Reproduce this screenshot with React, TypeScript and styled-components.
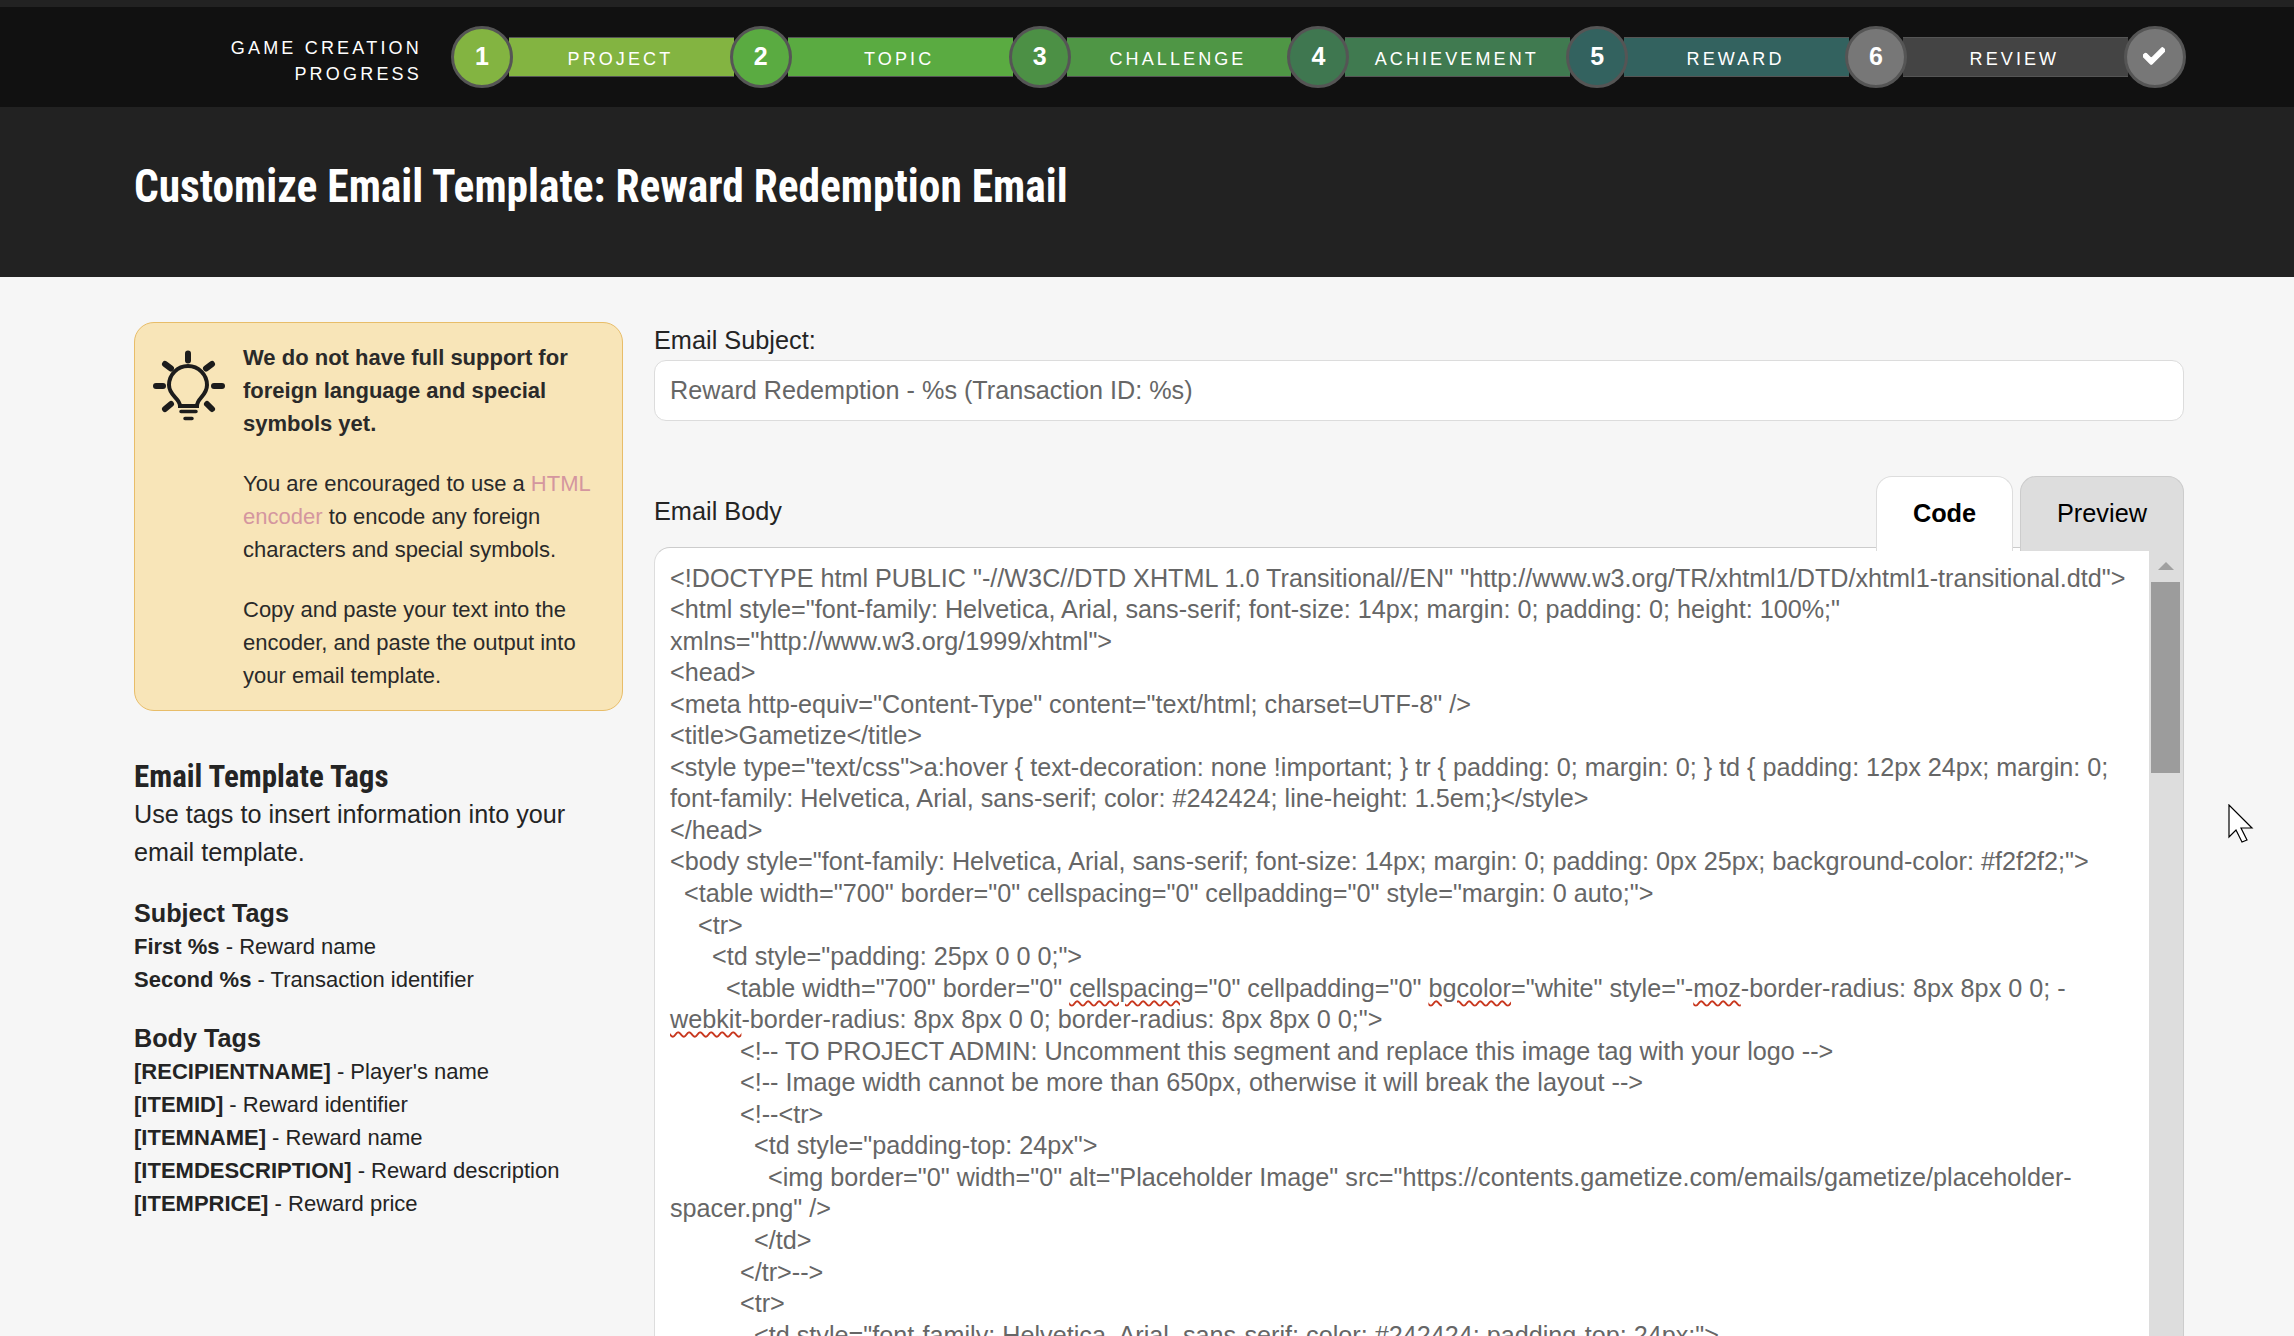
import React from "react";
import styled, { createGlobalStyle } from "styled-components";
import { FaCheck } from "react-icons/fa";

const Global = createGlobalStyle`
  html, body { margin: 0; padding: 0; height: 1336px; overflow: hidden; background: #f6f6f6; }
  body { font-family: "Liberation Sans", Arial, sans-serif; color: #242424; }
  * { box-sizing: border-box; }
`;

const Page = styled.div`
  position: relative;
  width: 2294px;
  height: 1336px;
  overflow: hidden;
  background: #f6f6f6;
`;

const TopStrip = styled.div`
  height: 7px;
  background: #222;
`;

const ProgressNav = styled.nav`
  display: flex;
  align-items: center;
  height: 100px;
  background: #111;
`;

const ProgressLabel = styled.div`
  width: 422px;
  margin-right: 29px;
  padding-top: 7px;
  text-align: right;
  color: #fff;
  font-size: 18px;
  line-height: 26px;
  letter-spacing: 3.2px;
`;

const Track = styled.ol`
  display: flex;
  align-items: center;
  margin: 0;
  padding: 0;
  list-style: none;
`;

const Step = styled.li`
  display: flex;
  align-items: center;
`;

const Circle = styled.span<{ $bg: string }>`
  position: relative;
  z-index: 1;
  display: flex;
  align-items: center;
  justify-content: center;
  width: 62px;
  height: 62px;
  border: 3px solid #555;
  border-radius: 50%;
  background: ${(p) => p.$bg};
  color: #fff;
  font-size: 25px;
  font-weight: 700;
  padding-bottom: 2px;
`;

const Bar = styled.span<{ $bg: string }>`
  display: flex;
  align-items: center;
  justify-content: center;
  width: 224.8px;
  height: 40px;
  margin: 0 -4px;
  padding: 4px 2px 0 0;
  background: ${(p) => p.$bg};
  border-top: 1.5px solid #555;
  border-bottom: 1.5px solid #555;
  color: #fff;
  font-size: 18px;
  letter-spacing: 3.1px;
`;

const CheckMark = styled(FaCheck)`
  stroke: currentColor;
  stroke-width: 30px;
  margin-left: -2px;
`;

const TitleBar = styled.header`
  display: flex;
  align-items: center;
  height: 170px;
  padding: 0 0 12px 134px;
  background: #222;
`;

const Title = styled.h1`
  margin: 0;
  color: #fff;
  font-family: "Roboto Condensed", "Liberation Sans Narrow", Roboto, sans-serif;
  font-size: 46px;
  font-weight: 700;
  line-height: 54px;
  transform: scaleX(0.944);
  transform-origin: left center;
  white-space: nowrap;
`;

const Main = styled.main`
  display: flex;
  gap: 31px;
  padding: 45px 110px 0 134px;
`;

const Sidebar = styled.aside`
  flex: none;
  width: 489px;
`;

const Alert = styled.section`
  display: grid;
  grid-template-columns: 72px 1fr;
  column-gap: 18px;
  height: 389px;
  padding: 17.5px 20px 0 18px;
  background: #f8e5b8;
  border: 1px solid #e8bd69;
  border-radius: 20px;
  font-size: 22px;
  line-height: 33px;
  color: #2a2a2a;
`;

const BulbWrap = styled.div`
  padding-top: 9px;
`;

const AlertText = styled.div`
  min-width: 0;
`;

const AlertPara = styled.p`
  margin: 0 0 27px;
`;

const AlertLink = styled.a`
  color: #d4969f;
  text-decoration: none;
`;

const TagsHeading = styled.h2`
  margin: 46px 0 0;
  font-family: "Roboto Condensed", "Liberation Sans Narrow", Roboto, sans-serif;
  font-size: 32px;
  font-weight: 700;
  line-height: 38px;
  color: #242424;
  white-space: nowrap;
  transform: scaleX(0.967);
  transform-origin: left center;
`;

const TagsIntro = styled.p`
  margin: 0;
  font-size: 25.2px;
  line-height: 38px;
`;

const TagGroup = styled.div`
  margin-top: 26px;
  font-size: 22px;
  line-height: 33px;
`;

const TagGroupTitle = styled.h3`
  margin: 0;
  font-size: 25.2px;
  font-weight: 700;
  line-height: 33px;
`;

const TagRow = styled.div``;

const Content = styled.div`
  flex: 1;
  min-width: 0;
`;

const FieldLabel = styled.label`
  display: block;
  font-size: 25.3px;
  line-height: 36px;
  margin-bottom: 2px;
`;

const SubjectInput = styled.div`
  height: 61px;
  padding: 0 15px;
  display: flex;
  align-items: center;
  background: #fff;
  border: 1px solid #dcdcdc;
  border-radius: 12px;
  color: #666;
  font-size: 25.2px;
`;

const BodyHead = styled.div`
  position: relative;
  z-index: 1;
  display: flex;
  align-items: center;
  justify-content: space-between;
  margin-top: 55px;
  height: 71px;
`;

const Tabs = styled.div`
  display: flex;
  gap: 7px;
  align-self: flex-start;
`;

const Tab = styled.div<{ $active?: boolean }>`
  display: flex;
  align-items: center;
  justify-content: center;
  height: 75px;
  padding-bottom: 2px;
  border: 1px solid ${(p) => (p.$active ? "#ddd" : "#ccc")};
  border-bottom: none;
  border-radius: 16px 16px 0 0;
  background: ${(p) => (p.$active ? "#fff" : "#ddd")};
  color: #000;
  font-size: 25.3px;
  font-weight: ${(p) => (p.$active ? 700 : 400)};
  width: ${(p) => (p.$active ? "137px" : "164px")};
`;

const Editor = styled.div`
  display: flex;
  height: 800px;
  border-top: 1px solid #ccc;
  border-left: 1px solid #ddd;
  border-top-left-radius: 16px;
  background: #fff;
`;

const CodeArea = styled.div`
  flex: 1;
  min-width: 0;
  padding: 14.5px 15px 0;
  color: #666;
  font-size: 25.2px;
  line-height: 31.55px;
  overflow: hidden;
`;

const CodeLine = styled.div`
  white-space: pre-wrap;
`;

const Misspelled = styled.span`
  text-decoration: underline wavy #c8371e 1.5px;
  text-underline-offset: 3px;
`;

const Scrollbar = styled.div`
  flex: none;
  width: 35px;
  background: #ddd;
  border-right: 1px solid #ccc;
`;

const ScrollArrow = styled.div`
  margin: 14px auto 0;
  width: 0;
  height: 0;
  border-left: 8.5px solid transparent;
  border-right: 8.5px solid transparent;
  border-bottom: 8px solid #a0a0a0;
`;

const ScrollThumb = styled.div`
  margin: 12px 3px 0 2px;
  height: 191px;
  background: #9c9c9c;
`;

const Pointer = styled.svg`
  position: absolute;
  left: 2228px;
  top: 804px;
`;

const Bulb = () => (
  <svg width="72" height="72" viewBox="0 0 72 72" fill="none" stroke="#1c1c1c" strokeLinecap="round">
    <g strokeWidth="6">
      <path d="M35 3.5v7" />
      <path d="M12 14l6 4.5" />
      <path d="M59 14l-6 4.5" />
      <path d="M3 36h7" />
      <path d="M61 36h8" />
      <path d="M12 59l6-5" />
      <path d="M59 59l-5-5" />
    </g>
    <path strokeWidth="4" d="M27 56C27 48 16 46 16 35A19 19 0 0 1 54 35C54 46 44 48 44 56Z" />
    <path strokeWidth="3.5" d="M28 61.5h15M32 68.5h7" />
  </svg>
);

const steps = [
  { n: "1", label: "PROJECT", c: "#83b441", b: "#83b441" },
  { n: "2", label: "TOPIC", c: "#5aab41", b: "#5aab41" },
  { n: "3", label: "CHALLENGE", c: "#4c9045", b: "#4f9645" },
  { n: "4", label: "ACHIEVEMENT", c: "#3f7750", b: "#407a50" },
  { n: "5", label: "REWARD", c: "#33625f", b: "#33625f" },
  { n: "6", label: "REVIEW", c: "#777", b: "#444" },
];

type Seg = string | { bad: string };
const code: Seg[][] = [
  [`<!DOCTYPE html PUBLIC "-//W3C//DTD XHTML 1.0 Transitional//EN" "http://www.w3.org/TR/xhtml1/DTD/xhtml1-transitional.dtd">`],
  [`<html style="font-family: Helvetica, Arial, sans-serif; font-size: 14px; margin: 0; padding: 0; height: 100%;" xmlns="http://www.w3.org/1999/xhtml">`],
  [`<head>`],
  [`<meta http-equiv="Content-Type" content="text/html; charset=UTF-8" />`],
  [`<title>Gametize</title>`],
  [`<style type="text/css">a:hover { text-decoration: none !important; } tr { padding: 0; margin: 0; } td { padding: 12px 24px; margin: 0; font-family: Helvetica, Arial, sans-serif; color: #242424; line-height: 1.5em;}</style>`],
  [`</head>`],
  [`<body style="font-family: Helvetica, Arial, sans-serif; font-size: 14px; margin: 0; padding: 0px 25px; background-color: #f2f2f2;">`],
  [`  <table width="700" border="0" cellspacing="0" cellpadding="0" style="margin: 0 auto;">`],
  [`    <tr>`],
  [`      <td style="padding: 25px 0 0 0;">`],
  [
    `        <table width="700" border="0" `,
    { bad: "cellspacing" },
    `="0" cellpadding="0" `,
    { bad: "bgcolor" },
    `="white" style="-`,
    { bad: "moz" },
    `-border-radius: 8px 8px 0 0; -`,
    { bad: "webkit" },
    `-border-radius: 8px 8px 0 0; border-radius: 8px 8px 0 0;">`,
  ],
  [`          <!-- TO PROJECT ADMIN: Uncomment this segment and replace this image tag with your logo -->`],
  [`          <!-- Image width cannot be more than 650px, otherwise it will break the layout -->`],
  [`          <!--<tr>`],
  [`            <td style="padding-top: 24px">`],
  [`              <img border="0" width="0" alt="Placeholder Image" src="https://contents.gametize.com/emails/gametize/placeholder-spacer.png" />`],
  [`            </td>`],
  [`          </tr>-->`],
  [`          <tr>`],
  [`            <td style="font-family: Helvetica, Arial, sans-serif; color: #242424; padding-top: 24px;">`],
];

export default function App() {
  return (
    <Page>
      <Global />
      <TopStrip />
      <ProgressNav>
        <ProgressLabel>
          GAME CREATION
          <br />
          PROGRESS
        </ProgressLabel>
        <Track>
          {steps.map((s) => (
            <Step key={s.n}>
              <Circle $bg={s.c}>{s.n}</Circle>
              <Bar $bg={s.b}>{s.label}</Bar>
            </Step>
          ))}
          <Step>
            <Circle $bg="#777">
              <CheckMark size={22} />
            </Circle>
          </Step>
        </Track>
      </ProgressNav>
      <TitleBar>
        <Title>Customize Email Template: Reward Redemption Email</Title>
      </TitleBar>
      <Main>
        <Sidebar>
          <Alert>
            <BulbWrap>
              <Bulb />
            </BulbWrap>
            <AlertText>
              <AlertPara>
                <strong>We do not have full support for foreign language and special symbols yet.</strong>
              </AlertPara>
              <AlertPara>
                You are encouraged to use a <AlertLink href="#">HTML encoder</AlertLink> to encode any foreign
                characters and special symbols.
              </AlertPara>
              <AlertPara>Copy and paste your text into the encoder, and paste the output into your email template.</AlertPara>
            </AlertText>
          </Alert>
          <TagsHeading>Email Template Tags</TagsHeading>
          <TagsIntro>Use tags to insert information into your email template.</TagsIntro>
          <TagGroup>
            <TagGroupTitle>Subject Tags</TagGroupTitle>
            <TagRow><strong>First %s</strong> - Reward name</TagRow>
            <TagRow><strong>Second %s</strong> - Transaction identifier</TagRow>
          </TagGroup>
          <TagGroup>
            <TagGroupTitle>Body Tags</TagGroupTitle>
            <TagRow><strong>[RECIPIENTNAME]</strong> - Player's name</TagRow>
            <TagRow><strong>[ITEMID]</strong> - Reward identifier</TagRow>
            <TagRow><strong>[ITEMNAME]</strong> - Reward name</TagRow>
            <TagRow><strong>[ITEMDESCRIPTION]</strong> - Reward description</TagRow>
            <TagRow><strong>[ITEMPRICE]</strong> - Reward price</TagRow>
          </TagGroup>
        </Sidebar>
        <Content>
          <FieldLabel>Email Subject:</FieldLabel>
          <SubjectInput>Reward Redemption - %s (Transaction ID: %s)</SubjectInput>
          <BodyHead>
            <FieldLabel>Email Body</FieldLabel>
            <Tabs>
              <Tab $active>Code</Tab>
              <Tab>Preview</Tab>
            </Tabs>
          </BodyHead>
          <Editor>
            <CodeArea>
              {code.map((line, i) => (
                <CodeLine key={i}>
                  {line.map((seg, j) =>
                    typeof seg === "string" ? seg : <Misspelled key={j}>{seg.bad}</Misspelled>
                  )}
                </CodeLine>
              ))}
            </CodeArea>
            <Scrollbar>
              <ScrollArrow />
              <ScrollThumb />
            </Scrollbar>
          </Editor>
        </Content>
      </Main>
      <Pointer width="26" height="40" viewBox="0 0 26 40">
        <path d="M1 1v32l7-7 6 12 5-2-6-12h11z" fill="#fff" stroke="#000" strokeWidth="1.2" />
      </Pointer>
    </Page>
  );
}
